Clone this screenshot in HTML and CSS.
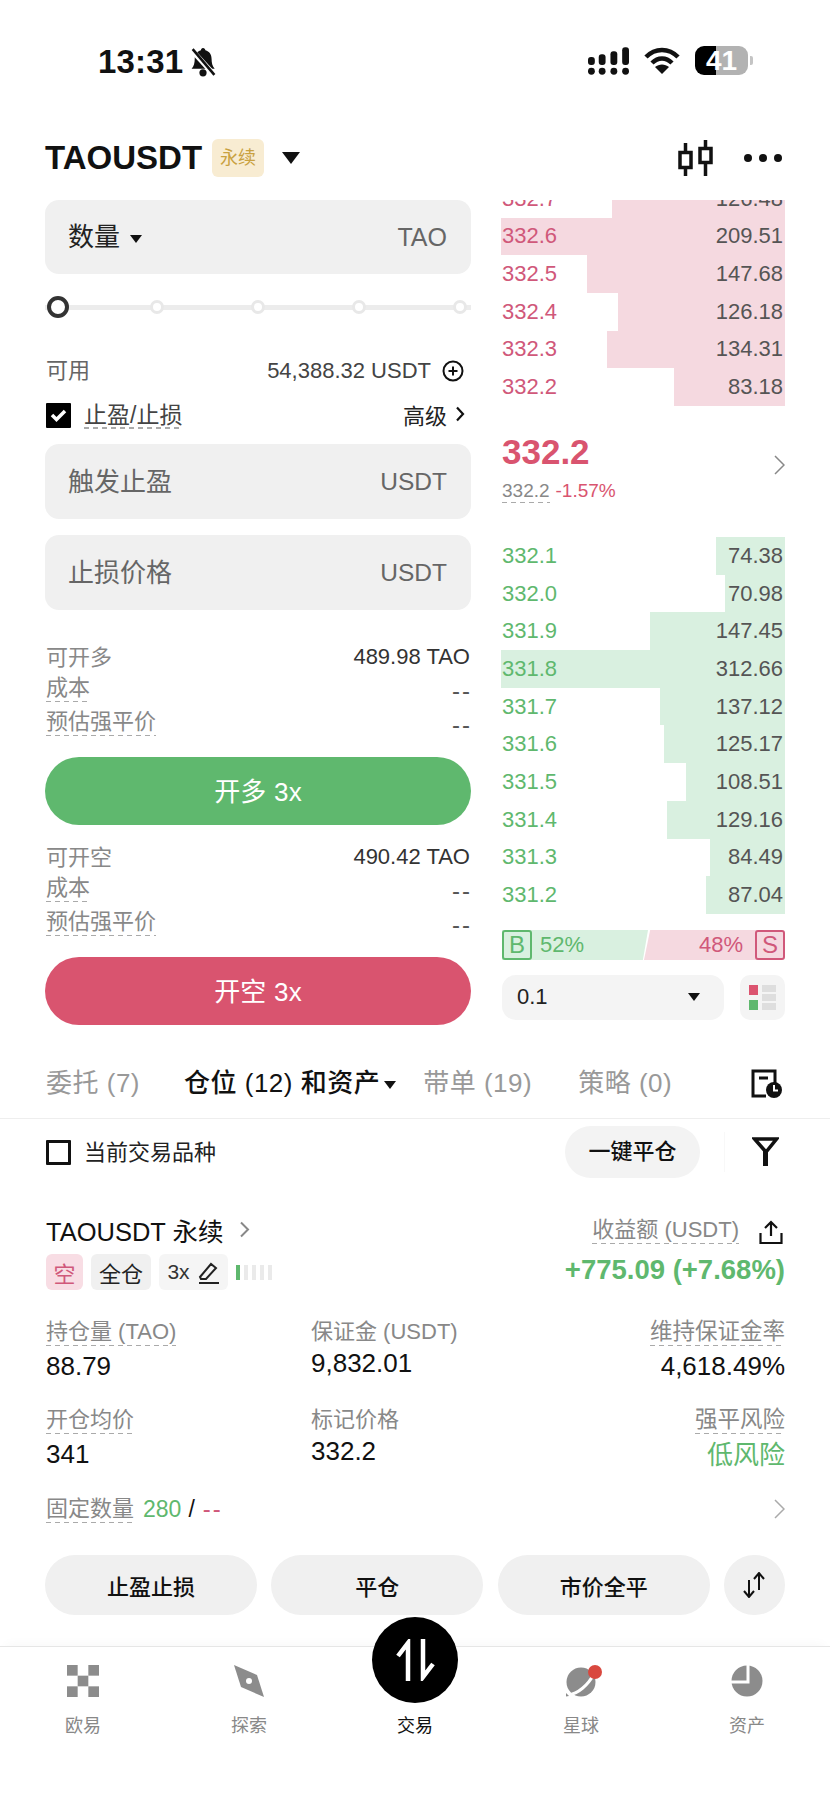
FILE: index.html
```html
<!DOCTYPE html>
<html lang="en">

<head>
    <meta charset="UTF-8">
    <meta name="viewport" content="width=device-width, initial-scale=1.0">
    <title>TAOUSDT</title>
    <link rel="stylesheet" href="styles.css">
</head>

<body>
    <div class="page">

        <!-- Status bar -->
        <div class="status-bar">
            <div class="status-left">
                <span class="time">13:31</span>
                <svg width="30" height="30" viewBox="0 0 28 29">
                    <path d="M14 1c1.300 0 2.200 1 2.300 2.200 3.800 1 6 4.200 6 8.300 0 4 .8 6.700 3 9.500H3c2.200-2.800 3-5.500 3-9.500 0-4.100 2.200-7.300 6-8.300C12 2 12.800 1 14 1z" fill="#111"/>
                    <circle cx="14" cy="25" r="3.500" fill="#111"/>
                    <path d="M3 3l22 24" stroke="#fff" stroke-width="5"/>
                    <path d="M4 2l21 25" stroke="#111" stroke-width="2.500"/>
                </svg>
            </div>
            <div class="status-right">
                <svg width="41" height="28" viewBox="0 0 42 28" fill="#111">
                    <rect x="0" y="10" width="7" height="8" rx="3"/>
                    <rect x="11" y="7" width="7" height="11" rx="3"/>
                    <rect x="23" y="4" width="7" height="14" rx="3"/>
                    <rect x="35" y="0" width="7" height="18" rx="3"/>
                    <circle cx="3.500" cy="24.500" r="3.500"/>
                    <circle cx="14.500" cy="24.500" r="3.500"/>
                    <circle cx="26.500" cy="24.500" r="3.500"/>
                    <circle cx="38.500" cy="24.500" r="3.500"/>
                </svg>
                <svg width="36" height="27" viewBox="0 0 36 27">
                    <path d="M2 10c9-9.500 23-9.500 32 0M8 16c6-6 14-6 20 0" fill="none" stroke="#111" stroke-width="4.500"/>
                    <path d="M18 27l-7-7c4-3.500 10-3.500 14 0z" fill="#111"/>
                </svg>
                <div class="battery"><span class="battery-text">41</span></div>
            </div>
        </div>

        <!-- Header -->
        <div class="header">
            <span class="symbol">TAOUSDT</span>
            <span class="perp-tag">永续</span>
            <span class="caret caret-lg"></span>
            <svg class="candle-icon" width="36" height="36" viewBox="0 0 36 36" fill="none" stroke="#111" stroke-width="3.500">
                <path d="M2 12.500h11v15H2zM7.500 3v9.500M7.500 27.500V36M22 8.500h11v14H22zM27.500 0v8.500M27.500 22.500V36"/>
            </svg>
            <div class="more-dots"><i></i><i></i><i></i></div>
        </div>

        <div class="trade">
            <!-- Order form -->
            <div class="form-col">
                <div class="field">
                    <span class="field-name">数量<span class="caret caret-sm"></span></span>
                    <span class="field-unit unit-tao">TAO</span>
                </div>

                <div class="slider">
                    <i class="knob"></i><i class="stop"></i><i class="stop"></i><i class="stop"></i><i class="stop"></i>
                </div>

                <div class="line avail">
                    <span class="muted-dark">可用</span>
                    <span class="avail-value">54,388.32 USDT
                        <svg width="22" height="22" viewBox="0 0 22 22" fill="none" stroke="#111" stroke-width="2">
                            <circle cx="11" cy="11" r="9.500"/>
                            <path d="M11 6.500v9M6.500 11h9"/>
                        </svg>
                    </span>
                </div>

                <div class="line tpsl">
                    <span class="check-wrap">
                        <span class="check on">
                            <svg width="17" height="14" viewBox="0 0 17 14" fill="none" stroke="#fff" stroke-width="3.500">
                                <path d="M2 7l4.500 4.500L15 3"/>
                            </svg>
                        </span>
                        <span class="dash tpsl-name">止盈/止损</span>
                    </span>
                    <span class="advanced">高级
                        <svg width="10" height="16" viewBox="0 0 10 16" fill="none" stroke="#111" stroke-width="2.200">
                            <path d="M2 1.500l6 6.500-6 6.500"/>
                        </svg>
                    </span>
                </div>

                <div class="field field-tp">
                    <span class="field-hint">触发止盈</span>
                    <span class="field-unit">USDT</span>
                </div>
                <div class="field field-sl">
                    <span class="field-hint">止损价格</span>
                    <span class="field-unit">USDT</span>
                </div>

                <div class="stats first-stats">
                    <div class="stat stat-a"><span class="stat-name">可开多</span><span class="stat-value">489.98 TAO</span></div>
                    <div class="stat stat-b"><span class="stat-name dash">成本</span><span class="stat-value">--</span></div>
                    <div class="stat stat-c"><span class="stat-name dash">预估强平价</span><span class="stat-value">--</span></div>
                </div>
                <button class="action-btn buy">开多 3x</button>

                <div class="stats">
                    <div class="stat stat-a"><span class="stat-name">可开空</span><span class="stat-value">490.42 TAO</span></div>
                    <div class="stat stat-b"><span class="stat-name dash">成本</span><span class="stat-value">--</span></div>
                    <div class="stat stat-c"><span class="stat-name dash">预估强平价</span><span class="stat-value">--</span></div>
                </div>
                <button class="action-btn sell">开空 3x</button>
            </div>

            <!-- Order book -->
            <div class="book-col">
                <div class="asks">
                    <div class="row ask"><i class="depth" style="width:60.9%"></i><span>332.7</span><b>126.48</b></div>
                    <div class="row ask"><i class="depth" style="width:100%"></i><span>332.6</span><b>209.51</b></div>
                    <div class="row ask"><i class="depth" style="width:69.7%"></i><span>332.5</span><b>147.68</b></div>
                    <div class="row ask"><i class="depth" style="width:58.8%"></i><span>332.4</span><b>126.18</b></div>
                    <div class="row ask"><i class="depth" style="width:62.7%"></i><span>332.3</span><b>134.31</b></div>
                    <div class="row ask"><i class="depth" style="width:39%"></i><span>332.2</span><b>83.18</b></div>
                </div>

                <div class="mid">
                    <div>
                        <div class="last-price">332.2</div>
                        <div class="mark-line"><span class="dash mark-price">332.2</span><span class="change">-1.57%</span></div>
                    </div>
                    <svg class="mid-arrow" width="11" height="20" viewBox="0 0 11 20" fill="none" stroke="#888" stroke-width="1.500">
                        <path d="M1 1l9 9-9 9"/>
                    </svg>
                </div>

                <div class="bids">
                    <div class="row bid"><i class="depth" style="width:24.3%"></i><span>332.1</span><b>74.38</b></div>
                    <div class="row bid"><i class="depth" style="width:21.1%"></i><span>332.0</span><b>70.98</b></div>
                    <div class="row bid"><i class="depth" style="width:47.5%"></i><span>331.9</span><b>147.45</b></div>
                    <div class="row bid"><i class="depth" style="width:100%"></i><span>331.8</span><b>312.66</b></div>
                    <div class="row bid"><i class="depth" style="width:44%"></i><span>331.7</span><b>137.12</b></div>
                    <div class="row bid"><i class="depth" style="width:42.5%"></i><span>331.6</span><b>125.17</b></div>
                    <div class="row bid"><i class="depth" style="width:34.8%"></i><span>331.5</span><b>108.51</b></div>
                    <div class="row bid"><i class="depth" style="width:41.5%"></i><span>331.4</span><b>129.16</b></div>
                    <div class="row bid"><i class="depth" style="width:26.4%"></i><span>331.3</span><b>84.49</b></div>
                    <div class="row bid"><i class="depth" style="width:27.8%"></i><span>331.2</span><b>87.04</b></div>
                </div>

                <div class="ratio">
                    <span class="ratio-box ratio-b">B</span>
                    <span class="ratio-buy">52%</span>
                    <span class="ratio-sell">48%</span>
                    <span class="ratio-box ratio-s">S</span>
                </div>

                <div class="book-tools">
                    <div class="tick-select"><span>0.1</span><span class="caret caret-sm"></span></div>
                    <div class="layout-btn">
                        <svg width="27" height="25" viewBox="0 0 27 25">
                            <rect x="0" y="0" width="9" height="10" fill="#dc5470"/>
                            <rect x="0" y="15" width="9" height="10" fill="#5fb86e"/>
                            <rect x="13" y="0" width="14" height="7" fill="#dedede"/>
                            <rect x="13" y="9" width="14" height="7" fill="#dedede"/>
                            <rect x="13" y="18" width="14" height="7" fill="#dedede"/>
                        </svg>
                    </div>
                </div>
            </div>
        </div>

        <!-- Tabs -->
        <div class="tabs">
            <span class="tab tab-orders">委托 (7)</span>
            <span class="tab tab-active">仓位 (12) 和资产<span class="caret caret-sm"></span></span>
            <span class="tab tab-copy">带单 (19)</span>
            <span class="tab">策略 (0)</span>
            <svg class="history-icon" width="31" height="29" viewBox="0 0 31 29" fill="none" stroke="#111" stroke-width="3">
                <path d="M15 27H2V2h22v12M8 9h9"/>
                <circle cx="23" cy="21" r="8" fill="#111" stroke="none"/>
                <path d="M23 16v5.500h4" stroke="#fff" stroke-width="2"/>
            </svg>
        </div>

        <div class="filter-row">
            <span class="check"></span>
            <span class="filter-name">当前交易品种</span>
            <span class="close-all">一键平仓</span>
            <span class="filter-sep"></span>
            <svg class="filter-icon" width="27" height="30" viewBox="0 0 27 30" fill="none" stroke="#111" stroke-width="3.500">
                <path d="M2.500 2h22L14 15z"/>
                <path d="M13.500 13v16" stroke-width="5"/>
            </svg>
        </div>

        <!-- Position card -->
        <div class="position">
            <div class="pos-head">
                <div>
                    <div class="pos-title">TAOUSDT 永续
                        <svg width="11" height="17" viewBox="0 0 11 17" fill="none" stroke="#888" stroke-width="2">
                            <path d="M2 1.500l7 7-7 7"/>
                        </svg>
                    </div>
                    <div class="pos-tags">
                        <span class="tag tag-short">空</span>
                        <span class="tag tag-cross">全仓</span>
                        <span class="tag tag-lev">3x
                            <svg width="22" height="23" viewBox="0 0 22 23" fill="none" stroke="#222" stroke-width="2">
                                <path d="M2 16L13 3l5 4L8 18H3zM1 22h20"/>
                            </svg>
                        </span>
                        <span class="risk-bars"><i class="on"></i><i></i><i></i><i></i><i></i></span>
                    </div>
                </div>
                <div class="pos-pnl">
                    <div class="pnl-label"><span class="dash">收益额 (USDT)</span>
                        <svg width="24" height="24" viewBox="0 0 24 24" fill="none" stroke="#111" stroke-width="2.200">
                            <path d="M12 16V2M6 8l6-6 6 6M1.500 13v10h21V13"/>
                        </svg>
                    </div>
                    <div class="pnl-value">+775.09 (+7.68%)</div>
                </div>
            </div>

            <div class="pos-grid">
                <div><span class="cell-name dash">持仓量 (TAO)</span><div class="cell-value">88.79</div></div>
                <div><span class="cell-name">保证金 (USDT)</span><div class="cell-value tight">9,832.01</div></div>
                <div class="cell-right"><span class="cell-name dash">维持保证金率</span><div class="cell-value">4,618.49%</div></div>
                <div><span class="cell-name dash">开仓均价</span><div class="cell-value">341</div></div>
                <div><span class="cell-name">标记价格</span><div class="cell-value tight">332.2</div></div>
                <div class="cell-right"><span class="cell-name dash">强平风险</span><div class="cell-value low-risk">低风险</div></div>
            </div>

            <div class="fixed-line">
                <span class="cell-name dash">固定数量</span>
                <span class="fixed-num">280</span>
                <span class="fixed-slash">/</span>
                <span class="fixed-dash">--</span>
                <svg width="11" height="20" viewBox="0 0 11 20" fill="none" stroke="#aaa" stroke-width="1.500">
                    <path d="M1 1l9 9-9 9"/>
                </svg>
            </div>

            <div class="pos-actions">
                <span class="pos-btn">止盈止损</span>
                <span class="pos-btn">平仓</span>
                <span class="pos-btn">市价全平</span>
                <span class="pos-btn pos-btn-icon">
                    <svg width="24" height="26" viewBox="0 0 24 26" fill="none" stroke="#111" stroke-width="2">
                        <path d="M7 8v17M2 19l5 6 5-6M17 18V1M12 7l5-6 5 6"/>
                    </svg>
                </span>
            </div>
        </div>

        <!-- Bottom navigation -->
        <div class="nav">
            <div class="nav-item">
                <svg width="32" height="32" viewBox="0 0 30 30" fill="#8c8c8c">
                    <rect x="0" y="0" width="10" height="10"/>
                    <rect x="20" y="0" width="10" height="10"/>
                    <rect x="10" y="10" width="10" height="10"/>
                    <rect x="0" y="20" width="10" height="10"/>
                    <rect x="20" y="20" width="10" height="10"/>
                </svg>
                <span>欧易</span>
            </div>
            <div class="nav-item">
                <svg width="32" height="32" viewBox="0 0 32 32">
                    <path d="M1 0l23 10 7 22-23-10z" fill="#8c8c8c"/>
                    <circle cx="16" cy="16" r="3" fill="#fff"/>
                </svg>
                <span>探索</span>
            </div>
            <div class="nav-item nav-active">
                <div class="nav-spacer"></div>
                <span>交易</span>
            </div>
            <div class="nav-item">
                <svg class="planet-icon" width="42" height="32" viewBox="0 0 42 32">
                    <circle cx="16" cy="17" r="14.500" fill="#8c8c8c"/>
                    <path d="M3 30c10-1 20-10 26-21" fill="none" stroke="#fff" stroke-width="3"/>
                    <path d="M1 28l3 3-3 .5z" fill="#8c8c8c"/>
                    <circle cx="30" cy="7" r="7" fill="#d9483f"/>
                </svg>
                <span>星球</span>
            </div>
            <div class="nav-item">
                <svg width="32" height="32" viewBox="0 0 32 32">
                    <circle cx="16" cy="16" r="15.500" fill="#8c8c8c"/>
                    <path d="M17 0v17H0" fill="none" stroke="#fff" stroke-width="3"/>
                </svg>
                <span>资产</span>
            </div>
            <div class="nav-trade">
                <svg width="39" height="42" viewBox="0 0 39 42" fill="none" stroke="#fff" stroke-width="4.500">
                    <path d="M12 42V4L2 17M27 0v38l10-13"/>
                </svg>
            </div>
        </div>
    </div>
</body>

</html>
```

FILE: styles.css
```css
* {
  box-sizing: border-box;
}
body {
  margin: 0;
  background-color: #ffffff;
  font-family: "Liberation Sans", "Noto Sans CJK SC", sans-serif;
  color: #111;
}
.page {
  width: 830px;
  height: 1804px;
  overflow: hidden;
}

/* status bar */
.status-bar {
  height: 100px;
  display: flex;
  justify-content: space-between;
  padding: 46px 82px 0 98px;
}
.status-left {
  display: flex;
  align-items: flex-start;
  gap: 5px;
}
.time {
  font-size: 33px;
  line-height: 30px;
  letter-spacing: 0.2px;
  font-weight: bold;
  margin-top: 1px;
}
.status-left svg {
  margin-top: 1px;
}
.status-right {
  display: flex;
  align-items: flex-start;
  gap: 15px;
}
.status-right svg {
  margin-top: 1px;
}
.battery {
  position: relative;
  width: 53px;
  height: 29px;
  border-radius: 9px;
  background: linear-gradient(to right, #000 40%, #b2b2b2 40%);
  text-align: center;
}
.battery::after {
  content: "";
  position: absolute;
  left: 55px;
  top: 10px;
  width: 3px;
  height: 9px;
  border-radius: 0 2px 2px 0;
  background-color: #c4c4c4;
}
.battery-text {
  color: #fff;
  font-size: 28px;
  line-height: 29px;
  font-weight: bold;
}

/* header */
.header {
  height: 100px;
  display: flex;
  align-items: center;
  padding: 16px 48px 0 45px;
}
.symbol {
  font-size: 33px;
  font-weight: bold;
}
.perp-tag {
  margin-left: 10px;
  width: 52px;
  height: 38px;
  border-radius: 6px;
  background-color: #f8ecd2;
  color: #c9a13f;
  font-size: 18px;
  line-height: 38px;
  text-align: center;
}
.caret {
  display: inline-block;
  width: 0;
  height: 0;
  border-style: solid;
  border-color: #111 transparent transparent transparent;
}
.caret-lg {
  margin-left: 18px;
  border-width: 12px 9px 0 9px;
}
.caret-sm {
  margin-left: 10px;
  border-width: 8px 6px 0 6px;
  vertical-align: middle;
}
.candle-icon {
  margin-left: auto;
}
.more-dots {
  display: flex;
  gap: 7px;
  margin-left: 30px;
}
.more-dots i {
  width: 8px;
  height: 8px;
  border-radius: 50%;
  background-color: #111;
}

/* trade area */
.trade {
  display: flex;
  gap: 30px;
  padding: 0 45px;
  height: 825px;
}
.form-col {
  width: 426px;
}
.book-col {
  width: 284px;
}
.field {
  height: 74px;
  border-radius: 14px;
  background-color: #f0f0f0;
  display: flex;
  align-items: center;
  justify-content: space-between;
  padding: 0 24px 0 23px;
  font-size: 26px;
}
.field-name {
  color: #222;
  margin-top: -6px;
}
.field-hint {
  color: #666;
  margin-top: -5px;
}
.field-unit {
  color: #666;
  font-size: 24.500px;
}
.unit-tao {
  font-size: 25px;
}
.field-tp {
  margin-top: 16px;
  height: 75px;
}
.field-sl {
  margin-top: 16px;
  height: 75px;
}
.slider {
  margin-top: 22px;
  height: 22px;
  display: flex;
  align-items: center;
  gap: 87px;
  padding: 0 4px 0 2px;
  background: linear-gradient(#ececec, #ececec) center / 100% 5px no-repeat;
}
.knob {
  width: 22px;
  height: 22px;
  margin-right: -6px;
  border: 4px solid #333;
  border-radius: 50%;
  background-color: #fff;
}
.stop {
  width: 14px;
  height: 14px;
  border: 3px solid #e8e8e8;
  border-radius: 50%;
  background-color: #fff;
}
.line {
  display: flex;
  justify-content: space-between;
  align-items: center;
}
.avail {
  margin-top: 40px;
  height: 24px;
  padding-left: 1px;
  font-size: 22px;
}
.muted-dark {
  color: #666;
  margin-top: -4px;
}
.avail-value {
  display: flex;
  align-items: center;
  gap: 11px;
  color: #444;
  margin-right: 6px;
  margin-top: 1px;
}
.avail-value svg {
  margin-right: 1px;
}
.tpsl {
  margin-top: 20px;
  height: 26px;
  font-size: 22px;
  padding-left: 1px;
}
.check-wrap {
  display: flex;
  align-items: center;
  gap: 13px;
}
.check {
  display: flex;
  align-items: center;
  justify-content: center;
  width: 25px;
  height: 25px;
  border: 3px solid #111;
  border-radius: 1px;
  flex-shrink: 0;
}
.check.on {
  background-color: #000;
  border: none;
}
.tpsl-name {
  color: #444;
  font-size: 23px;
  line-height: 27px;
}
.advanced {
  display: flex;
  align-items: center;
  gap: 8px;
  margin-right: 6px;
  margin-top: -3px;
  color: #222;
}

/* dashed underline under terms */
.dash {
  display: inline-block;
  background-image: linear-gradient(to right, #aaa 60%, transparent 60%);
  background-size: 9px 1.500px;
  background-position: left bottom;
  background-repeat: repeat-x;
}

.stats {
  margin-top: 17px;
}
.first-stats {
  margin-top: 32px;
}
.stat {
  display: flex;
  justify-content: space-between;
  align-items: flex-start;
  padding-left: 1px;
  font-size: 22px;
}
.stat-a {
  height: 30px;
  line-height: 30px;
}
.stat-b {
  height: 32px;
  padding-top: 2px;
  line-height: 28px;
}
.stat-c {
  height: 36px;
  padding-top: 4px;
  line-height: 28px;
}
.stat-name {
  color: #888;
}
.stat-a .stat-name {
  margin-top: 1px;
}
.stat-value {
  color: #333;
  margin-right: 1px;
}
.stat-b .stat-value,
.stat-c .stat-value {
  line-height: 34px;
  color: #555;
  font-size: 24px;
  letter-spacing: 2px;
  margin-right: -1px;
}
.action-btn {
  display: block;
  width: 100%;
  height: 68px;
  margin-top: 17px;
  padding-bottom: 5px;
  border: none;
  border-radius: 34px;
  color: #fff;
  font-family: inherit;
  font-size: 26px;
  letter-spacing: 0.2px;
}
.buy {
  background-color: #5fb86e;
}
.sell {
  background-color: #d9546f;
}

/* order book */
.asks {
  height: 206px;
  overflow: hidden;
  display: flex;
  flex-direction: column;
  justify-content: flex-end;
}
.row {
  position: relative;
  flex-shrink: 0;
  height: 37.700px;
  display: flex;
  justify-content: space-between;
  align-items: center;
  padding: 0 2px 0 1px;
  font-size: 22px;
}
.row span,
.row b {
  position: relative;
  font-weight: normal;
}
.row b {
  color: #555;
}
.depth {
  position: absolute;
  top: 0;
  right: 0;
  bottom: 0;
}
.ask .depth {
  background-color: #f5d9e0;
}
.ask span {
  color: #d0587a;
}
.bid .depth {
  background-color: #d9f0e0;
}
.bid span {
  color: #5fb86e;
}
.mid {
  height: 131px;
  padding-top: 26px;
  display: flex;
  justify-content: space-between;
}
.last-price {
  font-size: 35px;
  line-height: 40px;
  font-weight: bold;
  color: #d9546f;
  padding-left: 1px;
}
.mark-line {
  margin-top: 7px;
  font-size: 19px;
  line-height: 24px;
  padding-left: 1px;
}
.mark-price {
  color: #888;
}
.change {
  margin-left: 6px;
  color: #d9546f;
}
.mid-arrow {
  margin-top: 23px;
}
.ratio {
  position: relative;
  margin-top: 16px;
  height: 30px;
  display: flex;
  font-size: 22px;
  line-height: 30px;
  padding-left: 1px;
}
.ratio-box {
  position: absolute;
  z-index: 1;
  top: 0;
  width: 30px;
  height: 30px;
  border: 2px solid;
  border-radius: 3px;
  text-align: center;
  line-height: 26px;
  font-size: 24px;
}
.ratio-b {
  left: 1px;
  color: #5fb86e;
  border-color: #5fb86e;
  background-color: #d9f0e0;
}
.ratio-s {
  right: 0;
  color: #d0587a;
  border-color: #d0587a;
  background-color: #f5d9e0;
}
.ratio-buy {
  width: 146px;
  padding-left: 38px;
  color: #5fb86e;
  background-color: #d9f0e0;
  clip-path: polygon(0 0, 100% 0, 96.500% 100%, 0 100%);
}
.ratio-sell {
  width: 137px;
  margin-left: -4px;
  padding-right: 38px;
  text-align: right;
  color: #d0587a;
  background-color: #f5d9e0;
  clip-path: polygon(4.500% 0, 100% 0, 100% 100%, 0 100%);
}
.book-tools {
  margin-top: 15px;
  display: flex;
  justify-content: space-between;
  padding-left: 1px;
}
.tick-select {
  width: 222px;
  height: 45px;
  border-radius: 14px;
  background-color: #f4f4f4;
  display: flex;
  justify-content: space-between;
  align-items: center;
  padding: 0 24px 0 15px;
  font-size: 22px;
  color: #222;
}
.layout-btn {
  width: 45px;
  height: 45px;
  border-radius: 10px;
  background-color: #f4f4f4;
  display: flex;
  align-items: center;
  justify-content: center;
}

/* tabs */
.tabs {
  margin-top: 23px;
  height: 71px;
  padding: 0 48px 6px 46px;
  display: flex;
  align-items: center;
  border-bottom: 1px solid #eeeeee;
  font-size: 26px;
  letter-spacing: 0.5px;
  color: #999;
}
.tab {
  white-space: nowrap;
}
.tab-orders {
  margin-right: 44px;
}
.tab-active {
  color: #111;
  margin-right: 27px;
  font-weight: 500;
}
.tab-active .caret-sm {
  margin-left: 4px;
}
.tab-copy {
  margin-right: 46px;
}
.history-icon {
  margin-left: auto;
  margin-top: 6px;
}

.filter-row {
  height: 66px;
  padding: 0 51px 0 46px;
  display: flex;
  align-items: center;
}
.filter-name {
  margin-left: 13px;
  margin-top: -5px;
  font-size: 22px;
  color: #222;
}
.close-all {
  margin-left: auto;
  width: 135px;
  height: 52px;
  border-radius: 26px;
  background-color: #f3f3f3;
  text-align: center;
  font-size: 22px;
  line-height: 52px;
  font-weight: 500;
}
.filter-sep {
  width: 1px;
  height: 40px;
  margin-left: 24px;
  background-color: #f8f8f8;
}
.filter-icon {
  margin-left: 27px;
}

/* position card */
.position {
  padding: 30px 45px 0 46px;
}
.pos-head {
  display: flex;
  justify-content: space-between;
}
.pos-title {
  display: flex;
  align-items: center;
  gap: 15px;
  height: 28px;
  font-size: 25.500px;
  color: #111;
}
.pos-tags {
  display: flex;
  align-items: center;
  gap: 8px;
  margin-top: 11px;
  font-size: 22px;
}
.tag {
  height: 36px;
  border-radius: 6px;
  display: flex;
  align-items: center;
  justify-content: center;
}
.tag-short {
  width: 37px;
  background-color: #f8dde4;
  color: #d0587a;
}
.tag-cross {
  width: 60px;
  background-color: #f0f0f0;
  color: #222;
}
.tag-lev {
  width: 69px;
  gap: 8px;
  background-color: #f5f5f5;
  color: #333;
  font-size: 21px;
}
.risk-bars {
  display: flex;
  gap: 4px;
}
.risk-bars i {
  width: 4px;
  height: 15px;
  background-color: #eaeaea;
}
.risk-bars i.on {
  background-color: #5fb86e;
}
.pos-pnl {
  text-align: right;
  padding-top: 1px;
}
.pnl-label {
  display: flex;
  justify-content: flex-end;
  align-items: flex-start;
  gap: 20px;
  height: 29px;
  font-size: 22px;
  line-height: 28px;
  color: #888;
}
.pnl-label svg {
  margin-top: 4px;
  margin-right: 2px;
}
.pnl-value {
  margin-top: 9px;
  font-size: 27.500px;
  line-height: 32px;
  font-weight: bold;
  color: #5fb86e;
}
.pos-grid {
  margin-top: 28px;
  display: grid;
  grid-template-columns: 265px 1fr auto;
  row-gap: 24px;
}
.cell-name {
  font-size: 22px;
  line-height: 28px;
  color: #888;
}
.cell-right .cell-name {
  font-size: 22.500px;
}
.cell-value {
  margin-top: 4px;
  font-size: 26px;
  line-height: 32px;
  color: #111;
}
.cell-value.tight {
  margin-top: 1px;
}
.cell-right {
  text-align: right;
}
.low-risk {
  margin-top: 5px;
  color: #5fb86e;
  font-size: 26px;
}
.fixed-line {
  margin-top: 24px;
  height: 28px;
  display: flex;
  align-items: center;
  font-size: 23px;
}
.fixed-num {
  margin-left: 9px;
  color: #5fb86e;
}
.fixed-slash {
  margin-left: 7px;
}
.fixed-dash {
  margin-left: 8px;
  color: #d0587a;
  font-size: 24px;
  letter-spacing: 2px;
}
.fixed-line svg {
  margin-left: auto;
}
.pos-actions {
  margin-top: 32px;
  margin-left: -1px;
  display: flex;
  justify-content: space-between;
}
.pos-btn {
  width: 212px;
  height: 60px;
  border-radius: 30px;
  background-color: #f0f0f0;
  display: flex;
  align-items: center;
  justify-content: center;
  font-size: 22px;
  font-weight: 500;
}
.pos-btn-icon {
  width: 61px;
}

/* bottom nav */
.nav {
  position: relative;
  margin-top: 31px;
  height: 157px;
  display: flex;
  border-top: 1px solid #e6e6e6;
  box-shadow: 0 -8px 10px -6px rgba(0, 0, 0, 0.03);
  padding-top: 18px;
}
.nav-item {
  width: 166px;
  display: flex;
  flex-direction: column;
  align-items: center;
  font-size: 18px;
  color: #888;
}
.nav-item svg,
.nav-spacer {
  height: 32px;
}
.nav-item span {
  margin-top: 17px;
  line-height: 24px;
}
.planet-icon {
  margin-left: 10px;
}
.nav-active {
  color: #111;
}
.nav-trade {
  position: absolute;
  left: 372px;
  top: -30px;
  width: 86px;
  height: 86px;
  border-radius: 50%;
  background-color: #000;
  display: flex;
  align-items: center;
  justify-content: center;
}
```
